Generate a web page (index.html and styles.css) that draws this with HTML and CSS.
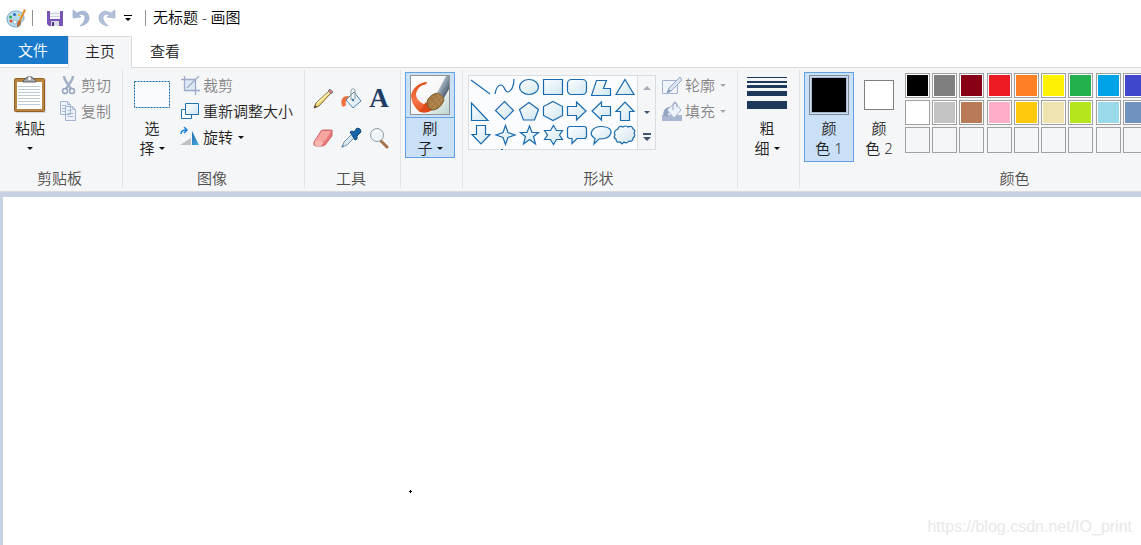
FILE: index.html
```html
<!DOCTYPE html>
<html lang="zh-CN">
<head>
<meta charset="utf-8">
<meta name="viewport" content="width=device-width, initial-scale=1">
<title>无标题 - 画图</title>
<link rel="stylesheet" href="styles.css">
</head>
<body>
<svg class="defs" aria-hidden="true">
  <defs>
    <linearGradient id="pale" x1="0" y1="0" x2="1" y2="1"><stop offset="0" stop-color="#fff"/><stop offset="1" stop-color="#cfe6ee"/></linearGradient>
    <linearGradient id="blue" x1="0" y1="0" x2="1" y2="1"><stop offset="0" stop-color="#1b6cb0"/><stop offset="1" stop-color="#4fb0e0"/></linearGradient>
    <linearGradient id="stroke" x1="0" y1="0" x2="0" y2="1"><stop offset="0" stop-color="#e04a14"/><stop offset=".6" stop-color="#f4774a"/><stop offset="1" stop-color="#e8521f"/></linearGradient>
    <linearGradient id="paper" x1="0" y1="0" x2="1" y2="1"><stop offset="0" stop-color="#fff"/><stop offset=".6" stop-color="#f4f5f4"/><stop offset="1" stop-color="#b9d3cd"/></linearGradient>
    <linearGradient id="steel" x1="0" y1="0" x2="1" y2="1"><stop offset="0" stop-color="#f2f5f8"/><stop offset=".5" stop-color="#8d9cac"/><stop offset="1" stop-color="#25364d"/></linearGradient>
  </defs>
</svg>
<header class="titlebar">
  <svg class="app-icon" width="20" height="20" viewBox="0 0 20 20" aria-hidden="true">
    <path d="M1 11C1 6 5 3 10 3c5 0 8 3 8 7 0 3-2 3-3 4s1 5-5 5C5 19 1 16 1 11z" fill="#b9dced" stroke="#6ea3c0"/>
    <circle cx="9" cy="14" r="2" fill="#fff" stroke="#6ea3c0" stroke-width=".7"/>
    <circle cx="4.500" cy="9" r="1.500" fill="#36a852"/><circle cx="8.500" cy="6.500" r="1.500" fill="#3169c9"/><circle cx="5" cy="13" r="1.500" fill="#e5502f"/><circle cx="13" cy="7" r="1.300" fill="#edc43b"/>
    <path d="M18 1l2 1-5 11-2-1z" fill="#e09036"/><path d="M13 12l2 1c0 3-1 5-4 6 0-3 0-5 2-7z" fill="#b96a2a"/>
  </svg>
  <span class="bar"></span>
  <div class="quick">
    <button aria-label="保存"><svg width="18" height="18" viewBox="0 0 18 18"><path d="M1 2h16v15H3l-2-2z" fill="#7754b5"/><path d="M4 2h10v8H4z" fill="#f3f3fa"/><path d="M4 4.500h10M4 7.500h10" stroke="#cdcfe0"/><path d="M5 12h8v5H5z" fill="#d7dbe8"/><path d="M6 13h2v4H6z" fill="#51358a"/></svg></button>
    <button aria-label="撤消"><svg width="18" height="18" viewBox="0 0 18 18"><path d="M1 1v8l8-1-2.500-2C10 4 13 6 13 9c0 3-2 5-5 8 6-1 9-4 9-8 0-6-6-9-12-5z" fill="#a9b8d6" stroke="#93a4c6" stroke-width=".6"/></svg></button>
    <button aria-label="重做"><svg width="18" height="18" viewBox="0 0 18 18"><path d="M17 1v8l-8-1 2.500-2C8 4 5 6 5 9c0 3 2 5 5 8C4 16 1 13 1 9c0-6 6-9 12-5z" fill="#b3c1dc" stroke="#93a4c6" stroke-width=".6"/></svg></button>
    <button class="customize" aria-label="自定义快速访问工具栏"><svg width="8" height="8" viewBox="0 0 8 8"><path d="M0 1h8v1H0zM1 4h6L4 7z" fill="#000"/></svg></button>
  </div>
  <span class="bar"></span>
  <h1 class="title">无标题 - 画图</h1>
</header>
<nav class="tabs">
  <button class="tab file">文件</button>
  <button class="tab active">主页</button>
  <button class="tab">查看</button>
</nav>
<section class="ribbon">
  <div class="group clipboard">
    <div class="tools">
      <button class="big"><span class="pic"><svg width="34" height="40" viewBox="0 1 34 40">
        <path d="M3 5h30v34H3z" fill="#d8dadd"/><rect x="1.500" y="4.500" width="30" height="33" rx="1" fill="#b98543" stroke="#936124"/><path d="M4 8h25v27H4z" fill="#fff"/><path d="M5 12.500h22M5 15.500h22M5 18.500h22M5 21.500h22M5 24.500h22M5 27.500h22M5 30.500h22" stroke="#bdcbd7"/><path d="M10 7c1-3 3-1 4-4h5c1 3 3 1 4 4v1H10z" fill="#a5a9ac" stroke="#5a5e61"/><circle cx="16.500" cy="4.500" r="1.500" fill="#fff"/></svg></span>
        <span>粘贴</span><span class="line"><i class="caret"></i></span></button>
      <div class="rows">
        <button class="small" disabled><svg width="20" height="22" viewBox="0 0 20 22"><path d="M6 2c0 4 4 8 7 13M15 2c0 4-4 8-7 13" fill="none" stroke="#a3b1c8" stroke-width="2.500"/><circle cx="7" cy="17" r="2.500" fill="none" stroke="#94a5c2" stroke-width="1.500"/><circle cx="14" cy="17" r="2.500" fill="none" stroke="#94a5c2" stroke-width="1.500"/></svg>剪切</button>
        <button class="small" disabled><svg width="20" height="22" viewBox="0 0 20 22"><path d="M2.500 1.500h7l3 3v10h-10zM7.500 6.500h7l3 3v11h-10z" fill="#edf2fb" stroke="#a3b3d2"/><path d="M9.500 1.500v3h3M14.500 6.500v3h3M4 5.500h4M4 8.500h3M4 11.500h3M9.500 10.500h4M9.500 13.500h6M9.500 16.500h6" fill="none" stroke="#a9b9d6"/></svg>复制</button>
      </div>
    </div>
    <div class="caption">剪贴板</div>
  </div>
  <div class="group image">
    <div class="tools">
      <button class="big"><span class="pic"><svg width="36" height="28" viewBox="0 0 36 28"><rect x=".5" y=".5" width="35" height="26" fill="#f9fcff" stroke="#1568a6" stroke-dasharray="2 1"/></svg></span>
        <span>选</span><span class="line">择<i class="caret"></i></span></button>
      <div class="rows">
        <button class="small" disabled><svg width="20" height="20" viewBox="0 0 20 20"><path d="M5 4h10v11H5z" fill="#e0e8f6"/><path d="M1 4.500h14.500V20M4.500 1v14.500H20M7 13L19 1" fill="none" stroke="#9dabc8" stroke-width="1.300"/></svg>裁剪</button>
        <button class="small"><svg width="20" height="20" viewBox="0 0 20 20"><path d="M1.500 8.500h10v9h-10z" fill="#fff" stroke="#1e72b1"/><path d="M5.500 2.500h13v11h-13z" fill="url(#pale)" stroke="#1e72b1"/></svg>重新调整大小</button>
        <button class="small"><svg width="20" height="20" viewBox="0 0 20 20"><path d="M0 18L11 11v7z" fill="#bec0c2"/><path d="M12 4l7 14h-7z" fill="url(#blue)"/><path d="M1 7c0-3 2-4 5-4M4 0l3 3-3 3" fill="none" stroke="#1c82de" stroke-width="1.500"/></svg>旋转<i class="caret"></i></button>
      </div>
    </div>
    <div class="caption">图像</div>
  </div>
  <div class="group toolbox">
    <div class="tools">
      <div class="tool-grid">
        <button aria-label="铅笔"><svg width="22" height="22" viewBox="0 0 22 22"><path d="M2 20l2-5L17 3l2 2L7 18z" fill="#f4d878" stroke="#7a643a"/><path d="M2 20l1-3 2 2z" fill="#46413a"/><path d="M16 3l2-2 3 3-2 2z" fill="#df7880" stroke="#4e7580" stroke-width=".8"/><path d="M5 15.500L17 4.500" stroke="#fff5b8" stroke-width="1.200"/></svg></button>
        <button aria-label="用颜色填充"><svg width="22" height="22" viewBox="0 0 22 22"><path d="M2 18C0 11 3 8 8 8l3 2c-4 0-6 3-5 7q-2 3-4 1z" fill="#ee7140"/><path d="M6 12l8-8 7 9-8 7z" fill="url(#pale)" stroke="#5586aa"/><path d="M11 12V3c0-3 4-3 4 0v8" fill="none" stroke="#8a989f"/><circle cx="13" cy="12" r="1.300" fill="#507a9a"/></svg></button>
        <button class="letter" aria-label="文本">A</button>
        <button aria-label="橡皮擦"><svg width="22" height="22" viewBox="0 0 22 22"><path d="M2 15L9 4q1-1 3-1h7q2 0 1 2v4l-7 9q-1 1-3 1H4q-3 0-2-4z" fill="#e97878" stroke="#cb6868"/><path d="M3 14L10 4h9l-6 10z" fill="#f7a6a0"/><path d="M3 14h6l3 1-3 4H4q-2-1-1-5z" fill="#f7b8b0"/></svg></button>
        <button aria-label="颜色选取器"><svg width="22" height="22" viewBox="0 0 22 22"><path d="M2 20l2-5 8-8 3 3-8 8z" fill="#d8e9f3" stroke="#7894a9"/><path d="M10 5l2-1 2 1 3-4q4 0 4 4l-4 4v3l-2 1z" fill="#1765a7" stroke="#164c7c"/><path d="M1 21l2-3 1 1z" fill="#2f78ae"/></svg></button>
        <button aria-label="放大镜"><svg width="22" height="22" viewBox="0 0 22 22"><path d="M13 14l6 6" stroke="#a5734e" stroke-width="3" stroke-linecap="round"/><circle cx="9" cy="8" r="6.500" fill="#edf5fa" stroke="#929da5"/><path d="M5 8q1-4 5-4" stroke="#fff" stroke-width="2" fill="none"/></svg></button>
      </div>
    </div>
    <div class="caption">工具</div>
  </div>
  <div class="group brush">
    <div class="tools">
      <button class="big picked"><span class="pic"><svg width="40" height="40" viewBox="0 0 40 40">
        <rect x=".5" y=".5" width="39" height="39" fill="url(#paper)" stroke="#8d9497"/>
        <path d="M13 10c2 0 4-1 4-3-6 0-14 5-16 13 0 7 4 13 9 17 4 1 9 0 12-2l-8-6c-5-2-8-6-8-10 1-5 4-8 7-9z" fill="url(#stroke)"/>
        <path d="M16 27l6 8c-4 3-9 3-13 1 3-1 4-6 7-9z" fill="#dd4a18"/>
        <path d="M17 28c0-5 6-10 12-10 4 2 6 6 4 9-2 5-7 8-11 8-3-1-5-4-5-7z" fill="#a47943" stroke="#765426"/>
        <path d="M19 32l12-11M22 34l11-10M19 25l7 8M23 21l7 9M27 19l5 7" stroke="#c59a61" stroke-width=".6"/>
        <path d="M27 18L36 1h3v13l-5 9c-2-3-4-5-7-5z" fill="url(#steel)"/></svg></span>
        <span>刷</span><span class="line">子<i class="caret"></i></span></button>
    </div>
  </div>
  <div class="group shapes">
    <div class="tools">
      <div class="gallery">
        <div class="shape-grid">
          <button aria-label="直线"><svg viewBox="0 1 24 24"><path d="M2 5l19 14"/></svg></button>
          <button aria-label="曲线"><svg viewBox="0 1 24 24"><path class="open" d="M2 19c1-6 3-9 6-9 4 0 3 7 7 7 4-1 6-7 6-13"/></svg></button>
          <button aria-label="椭圆形"><svg viewBox="0 1 24 24"><ellipse cx="12" cy="12" rx="9.500" ry="7.500"/></svg></button>
          <button aria-label="矩形"><svg viewBox="0 1 24 24"><path d="M2.500 4.500h19v15h-19z"/></svg></button>
          <button aria-label="圆角矩形"><svg viewBox="0 1 24 24"><rect x="2.500" y="4.500" width="19" height="15" rx="4"/></svg></button>
          <button aria-label="多边形"><svg viewBox="0 1 24 24"><path d="M2.500 20.500l5-15h10l-3 8h7v7z"/></svg></button>
          <button aria-label="三角形"><svg viewBox="0 1 24 24"><path d="M12 4.500l9 15H3z"/></svg></button>
          <button aria-label="直角三角形"><svg viewBox="0 1 24 24"><path d="M2.500 4v17.500H19z"/></svg></button>
          <button aria-label="菱形"><svg viewBox="0 1 24 24"><path d="M11.500 2.500l9 9-9 9-9-9z"/></svg></button>
          <button aria-label="五边形"><svg viewBox="0 1 24 24"><path d="M12 3.500l9.500 7-4 10.500h-11l-4-10.500z"/></svg></button>
          <button aria-label="六边形"><svg viewBox="0 1 24 24"><path d="M12 2.500l9.500 5v9l-9.500 5-9.500-5v-9z"/></svg></button>
          <button aria-label="右箭头"><svg viewBox="0 1 24 24"><path d="M2.500 7.500h9V3l9.500 9-9.500 9v-4.500h-9z"/></svg></button>
          <button aria-label="左箭头"><svg viewBox="0 1 24 24"><path d="M21.500 7.500h-9V3L3 12l9.500 9v-4.500h9z"/></svg></button>
          <button aria-label="向上箭头"><svg viewBox="0 1 24 24"><path d="M7.500 21.500v-9H3L12 3l9 9.500h-4.500v9z"/></svg></button>
          <button aria-label="向下箭头"><svg viewBox="0 1 24 24"><path d="M7.500 2.500v9H3l9 9.500 9-9.500h-4.500v-9z"/></svg></button>
          <button aria-label="四角星形"><svg viewBox="0 1 24 24"><path d="M12.500 2.500l2.500 7 7 2.500-7 2.500-2.500 7-2.500-7L3 12l7-2.500z"/></svg></button>
          <button aria-label="五角星形"><svg viewBox="0 1 24 24"><path d="M12.500 3l2.500 6.500h6.500l-5 4 2 7.500-6-4.500-6 4.500 2-7.500-5-4H10z"/></svg></button>
          <button aria-label="六角星形"><svg viewBox="0 1 24 24"><path d="M12.500 2.500l3 5h6l-3 4.500 3 4.500h-6l-3 5-3-5h-6l3-4.500-3-4.500h6z"/></svg></button>
          <button aria-label="圆角矩形标注"><svg viewBox="0 1 24 24"><path d="M5 3.500h14q2.500 0 2.500 2.500v7q0 2.500-2.500 2.500h-7l-5 5v-5H5q-2.500 0-2.500-2.500V6q0-2.500 2.500-2.500z"/></svg></button>
          <button aria-label="椭圆形标注"><svg viewBox="0 1 24 24"><path d="M6 15.500C-2 11 4 3.500 12 3.500S24 7 21 12c-2 4-7 4-11 4l-5 5z"/></svg></button>
          <button aria-label="云形标注"><svg viewBox="0 1 24 24"><path d="M5 6q1-4 5-2 3-2 5 0 4-2 5 2 3 1 1 4 2 3-1 5 0 4-4 3-2 3-5 1l-2 2-2-2q-4 1-4-3-3-1-1-4-2-4 3-6z"/></svg></button>
        </div>
        <div class="scroller">
          <button disabled aria-label="向上滚动"><i class="up"></i></button>
          <button aria-label="向下滚动"><i class="caret"></i></button>
          <button aria-label="更多形状"><svg width="8" height="8" viewBox="0 0 8 8"><path d="M0 0h8v2H0zM0 4h8L4 8z" fill="#41556f"/></svg></button>
        </div>
        <i class="peek"></i>
      </div>
      <div class="rows">
        <button class="small" disabled><svg width="20" height="20" viewBox="0 0 20 20"><path d="M.5 5.500h15v13H.5z" fill="#f0f4fa" stroke="#a2b2cf"/><path d="M5 18l2-5L18 2l2 3L9 16z" fill="#dce4f1" stroke="#94a6c4"/><path d="M5 18l2-4 2 2z" fill="#8294b3"/></svg>轮廓<i class="caret"></i></button>
        <button class="small" disabled><svg width="20" height="20" viewBox="0 0 20 20"><path d="M0 14h20v6H0z" fill="#a9b7d3"/><path d="M1 15q0-9 7-9l1 4q-3 1-3 5z" fill="#94a5c4"/><path d="M5 9l8-7 6 7-7 8z" fill="#eef2f9" stroke="#a5b4cf"/><path d="M11 9V3q2-4 4 0v3" fill="none" stroke="#94a5c4"/></svg>填充<i class="caret"></i></button>
      </div>
    </div>
    <div class="caption">形状</div>
  </div>
  <div class="group size">
    <div class="tools">
      <button class="big"><span class="pic"><svg width="40" height="38" viewBox="0 0 40 38"><path d="M0 1h40v1H0zM0 5h40v2H0zM0 9h40v3H0zM0 15h40v5H0zM0 25h40v8H0z" fill="#1e395b"/></svg></span>
        <span>粗</span><span class="line">细<i class="caret"></i></span></button>
    </div>
  </div>
  <div class="group colors">
    <div class="tools">
      <button class="big slot picked"><span class="pic"><i class="ink primary"></i></span><span>颜</span><span>色 1</span></button>
      <button class="big slot"><span class="pic"><i class="ink secondary"></i></span><span>颜</span><span>色 2</span></button>
      <div class="palette">
        <button class="swatch black" aria-label="黑色"></button><button class="swatch gray" aria-label="灰色-50%"></button><button class="swatch maroon" aria-label="深红色"></button><button class="swatch red" aria-label="红色"></button><button class="swatch orange" aria-label="橙色"></button><button class="swatch yellow" aria-label="黄色"></button><button class="swatch green" aria-label="绿色"></button><button class="swatch azure" aria-label="青绿"></button><button class="swatch indigo" aria-label="靛青"></button><button class="swatch purple" aria-label="紫色"></button>
        <button class="swatch white" aria-label="白色"></button><button class="swatch silver" aria-label="灰色-25%"></button><button class="swatch brown" aria-label="褐色"></button><button class="swatch rose" aria-label="玫瑰色"></button><button class="swatch gold" aria-label="金色"></button><button class="swatch tan" aria-label="浅黄色"></button><button class="swatch lime" aria-label="酸橙色"></button><button class="swatch sky" aria-label="淡青绿色"></button><button class="swatch slate" aria-label="蓝灰色"></button><button class="swatch lavender" aria-label="淡紫色"></button>
        <button class="swatch" disabled aria-label="自定义 1"></button><button class="swatch" disabled aria-label="自定义 2"></button><button class="swatch" disabled aria-label="自定义 3"></button><button class="swatch" disabled aria-label="自定义 4"></button><button class="swatch" disabled aria-label="自定义 5"></button><button class="swatch" disabled aria-label="自定义 6"></button><button class="swatch" disabled aria-label="自定义 7"></button><button class="swatch" disabled aria-label="自定义 8"></button><button class="swatch" disabled aria-label="自定义 9"></button><button class="swatch" disabled aria-label="自定义 10"></button>
      </div>
    </div>
    <div class="caption">颜色</div>
  </div>
</section>
<main class="workspace">
  <div class="canvas">
    <svg class="dot" width="3" height="3" viewBox="0 0 3 3" aria-hidden="true"><path d="M1 0h1v1h1v1H2v1H1V2H0V1h1z"/></svg>
    <span class="watermark">https://blog.csdn.net/IO_print</span>
  </div>
</main>
</body>
</html>
```
FILE: styles.css
```css
* { box-sizing: border-box; }
body {
  margin: 0;
  height: 100vh;
  overflow: hidden;
  display: flex;
  flex-direction: column;
  background: #fff;
  color: #222;
  font: 15px/20px "Open Sans", "Noto Sans CJK SC", sans-serif;
  font-weight: 350;
}
button {
  margin: 0;
  padding: 0;
  border: 0;
  background: none;
  color: inherit;
  font: inherit;
}
svg { display: block; flex: none; }
.defs { position: absolute; width: 0; height: 0; }

.titlebar {
  flex: none;
  height: 36px;
  display: flex;
  align-items: center;
  padding-left: 6px;
}
.bar { width: 1px; height: 16px; background: #909090; }
.app-icon { margin-right: 6px; }
.quick { display: flex; align-items: center; gap: 8px; padding: 0 13px; }
.title { margin: 0 0 2px 7px; font-size: 15px; font-weight: 350; color: #000; }

.tabs {
  flex: none;
  display: flex;
  align-items: flex-start;
  height: 32px;
  box-shadow: inset 0 -1px #dadbdc;
}
.tab { width: 66px; height: 28px; padding-top: 2px; }
.tab.file { width: 68px; padding: 0 2px 0 0; background: #1979ca; color: #fff; }
.tab.active {
  width: 64px;
  height: 32px;
  padding: 0 0 3px;
  background: #f5f6f7;
  border: 1px solid #dadbdc;
  border-bottom: 0;
}

.ribbon {
  flex: none;
  display: flex;
  height: 124px;
  padding: 2px 0 3px;
  overflow: hidden;
  background: #f5f6f7;
  border-bottom: 1px solid #dadbdc;
}
.group {
  flex: none;
  display: flex;
  flex-direction: column;
  justify-content: space-between;
  padding-top: 2px;
  border-right: 1px solid #e2e3e4;
}
.tools { display: flex; align-items: flex-start; }
.caption { padding-right: 3px; text-align: center; color: #4d4d4d; }
.clipboard { width: 123px; }
.image { width: 182px; }
.toolbox { width: 96px; }
.brush { width: 62px; }
.shapes { width: 275px; }
.size { width: 62px; }
.colors { width: 432px; border-right: 0; }
.clipboard .tools { padding-left: 5px; gap: 3px; }
.image .tools { padding-left: 4px; gap: 3px; }
.toolbox .tools { padding: 7px 0 0 4px; }
.brush .tools, .size .tools, .colors .tools { padding-left: 4px; }
.shapes .tools { padding-left: 5px; gap: 6px; }

.big {
  width: 50px;
  display: flex;
  flex-direction: column;
  align-items: center;
}
.pic { height: 46px; display: flex; align-items: center; justify-content: center; }
.line { display: flex; align-items: center; height: 20px; gap: 4px; }
.caret {
  width: 0;
  height: 0;
  border: 3px solid transparent;
  border-top-color: #111;
  border-bottom: 0;
}
.up {
  width: 0;
  height: 0;
  border: 4px solid transparent;
  border-bottom-color: #a4acb8;
  border-top: 0;
}
.picked { background: #c9e0f7; box-shadow: inset 0 0 0 1px #62a2e4; }
.brush .pic { width: 50px; border-bottom: 1px solid #62a2e4; }
.slot { height: 90px; }

.rows { display: flex; flex-direction: column; }
.small { height: 26px; display: flex; align-items: center; gap: 3px; white-space: nowrap; }
.small .caret { margin-left: 2px; }
.small:disabled { color: #858585; }
.small:disabled .caret { margin-left: 2px; border-top-color: #a8a8a8; }

.tool-grid { display: grid; grid-template-columns: repeat(3, 28px); grid-auto-rows: 39px; }
.tool-grid button { display: flex; align-items: center; justify-content: center; }
.tool-grid .letter { font: bold 27px/39px "Liberation Serif", serif; color: #1e3c64; }

.gallery {
  position: relative;
  display: flex;
  width: 188px;
  height: 75px;
  margin-top: 3px;
  border: 1px solid #dadde0;
  background: #fafcfe;
}
.shape-grid { display: grid; grid-template-columns: repeat(7, 24px); grid-auto-rows: 24px; }
.shape-grid svg { width: 24px; height: 24px; fill: url(#pale); stroke: #1a6aad; stroke-width: 1.2; }
.shape-grid .open { fill: none; }
.peek { position: absolute; left: 32px; bottom: -1px; width: 2px; height: 1px; background: #2271b1; }
.scroller {
  flex: 1;
  display: grid;
  grid-template-rows: repeat(3, 1fr);
  background: #f5f6f7;
  border-left: 1px solid #dadde0;
}
.scroller button { display: flex; align-items: center; justify-content: center; }
.scroller .caret { border-top-color: #41556f; }

.ink { width: 30px; height: 30px; border: 1px solid #808080; background: #fff; }
.ink.primary {
  width: 40px;
  height: 40px;
  border-color: #7f8a96;
  background: #000;
  box-shadow: inset 0 0 0 1px #c9e0f7, inset 0 0 0 2px #a9b9cb;
}
.palette {
  width: 270px;
  margin: 1px 0 0 1px;
  display: grid;
  grid-template-columns: repeat(10, 25px);
  grid-template-rows: 25px 25px 26px;
  row-gap: 2px;
  justify-content: space-between;
}
.swatch { border: 1px solid #a0a0a0; box-shadow: inset 0 0 0 1px #fff; }
.swatch:disabled { box-shadow: none; }
.black { background: #000; }
.gray { background: #7f7f7f; }
.maroon { background: #880015; }
.red { background: #ed1c24; }
.orange { background: #ff7f27; }
.yellow { background: #fff200; }
.green { background: #22b14c; }
.azure { background: #00a2e8; }
.indigo { background: #3f48cc; }
.purple { background: #a349a4; }
.white { background: #fff; }
.silver { background: #c3c3c3; }
.brown { background: #b97a57; }
.rose { background: #ffaec9; }
.gold { background: #ffc90e; }
.tan { background: #efe4b0; }
.lime { background: #b5e61d; }
.sky { background: #99d9ea; }
.slate { background: #7092be; }
.lavender { background: #c8bfe7; }

.workspace { flex: 1; display: flex; padding: 5px 0 0 3px; background: #c8d1e2; }
.canvas { flex: 1; position: relative; background: #fff; }
.dot { position: absolute; left: 406px; top: 293px; }
.watermark {
  position: absolute;
  right: 9px;
  bottom: 8px;
  font: 16px/20px "Liberation Sans", Arial, sans-serif;
  color: #e8e8e8;
}
```
